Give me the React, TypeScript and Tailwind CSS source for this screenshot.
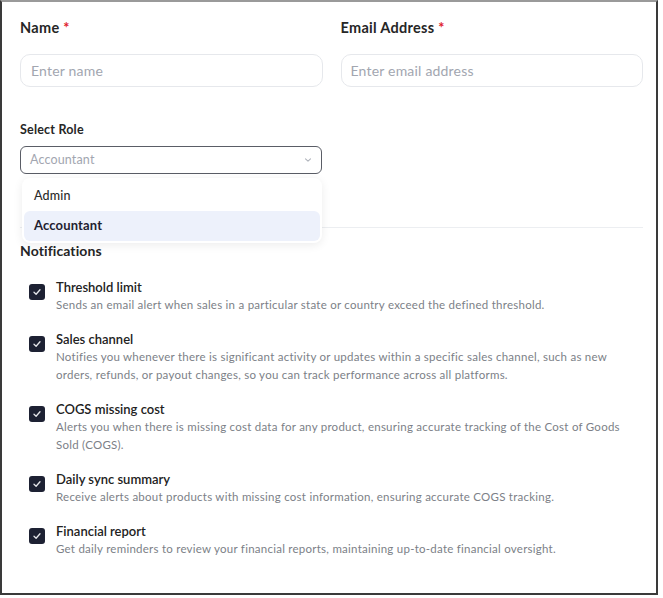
import React from "react";

const items = [
  {
    title: "Threshold limit",
    desc: "Sends an email alert when sales in a particular state or country exceed the defined threshold.",
  },
  {
    title: "Sales channel",
    desc: "Notifies you whenever there is significant activity or updates within a specific sales channel, such as new orders, refunds, or payout changes, so you can track performance across all platforms.",
  },
  {
    title: "COGS missing cost",
    desc: "Alerts you when there is missing cost data for any product, ensuring accurate tracking of the Cost of Goods Sold (COGS).",
  },
  {
    title: "Daily sync summary",
    desc: "Receive alerts about products with missing cost information, ensuring accurate COGS tracking.",
  },
  {
    title: "Financial report",
    desc: "Get daily reminders to review your financial reports, maintaining up-to-date financial oversight.",
  },
];

function Check() {
  return (
    <div className="mt-[4.5px] flex h-[16px] w-[16px] shrink-0 items-center justify-center rounded-[3px] bg-[#1d2133]">
      <svg width="10" height="10" viewBox="0 0 10 10" fill="none">
        <path d="M2 5.2 L4.1 7.2 L8 2.8" stroke="#e5e7eb" strokeWidth="1.3" strokeLinecap="round" strokeLinejoin="round" />
      </svg>
    </div>
  );
}

export default function App() {
  return (
    <div className="bg-white" style={{ fontFamily: "Lato, 'Noto Sans', sans-serif" }}>
      <div className="h-[595px] w-[658px] border-2 border-[#3a3a3a] border-t-[#9a9a9a] bg-white pl-[18px] pr-[13px] pt-[17px]">
        <div className="grid grid-cols-2 gap-x-[18px]">
          <div>
            <div className="h-[18px] text-[14.5px] font-bold leading-[18px] tracking-[0.3px] text-[#262626]">
              Name <span className="text-[#e0202c]">*</span>
            </div>
            <div className="mt-[17px] flex h-[33px] items-center rounded-[10px] border border-[#e6e8ec] px-[10px] text-[14px] tracking-[0.2px] text-[#a2a6b0]">
              Enter name
            </div>
          </div>
          <div>
            <div className="h-[18px] text-[14.5px] font-bold leading-[18px] tracking-[0.3px] text-[#262626]">
              Email Address <span className="text-[#e0202c]">*</span>
            </div>
            <div className="mt-[17px] flex h-[33px] items-center rounded-[10px] border border-[#e6e8ec] px-[9px] text-[14px] tracking-[0.2px] text-[#a2a6b0]">
              Enter email address
            </div>
          </div>
        </div>

        <div className="mt-[35px] h-[16px] text-[12.5px] font-bold leading-[16px] tracking-[0.2px] text-[#262626]">Select Role</div>
        <div className="relative mt-[8px] w-[302px]">
          <div className="flex h-[28px] items-center justify-between rounded-[6px] border-[1.5px] border-[#5a5d66] pl-[9px] pr-[8px] text-[12.5px] tracking-[0.15px] text-[#a2a6b0]">
            <span>Accountant</span>
            <svg width="10" height="10" viewBox="0 0 10 10" fill="none">
              <path d="M2.5 3.8 L5 6.2 L7.5 3.8" stroke="#b0b4bc" strokeWidth="1.1" strokeLinecap="round" strokeLinejoin="round" />
            </svg>
          </div>
          <div className="absolute left-[2px] right-0 top-[32px] z-10 rounded-[8px] bg-white px-[2px] pb-[2px] pt-[3px] shadow-[0_2px_10px_rgba(0,0,0,0.08)]">
            <div className="flex h-[30px] items-center rounded-[6px] px-[10px] text-[12.5px] font-medium tracking-[0.15px] text-[#2a2a2a]">Admin</div>
            <div className="flex h-[30px] items-center rounded-[6px] bg-[#edf1fb] px-[10px] text-[13px] font-bold tracking-[0.15px] text-[#1f2130]">
              Accountant
            </div>
          </div>
        </div>

        <div className="mt-[53px] h-px w-[623px] bg-[#eceef1]" />

        <div className="mt-[14px] h-[18px] text-[14px] font-bold leading-[18px] tracking-[0.1px] text-[#262626]">Notifications</div>

        <div className="mt-[19px] flex flex-col gap-[17px] pl-[9px]">
          {items.map((it) => (
            <div key={it.title} className="flex gap-[11px]">
              <Check />
              <div className="w-[570px]">
                <div className="text-[13px] font-semibold leading-[17px] text-[#222]">{it.title}</div>
                <div className="text-[11.5px] leading-[18px] tracking-[0.25px] text-[#7c7f87]">{it.desc}</div>
              </div>
            </div>
          ))}
        </div>
      </div>
    </div>
  );
}
